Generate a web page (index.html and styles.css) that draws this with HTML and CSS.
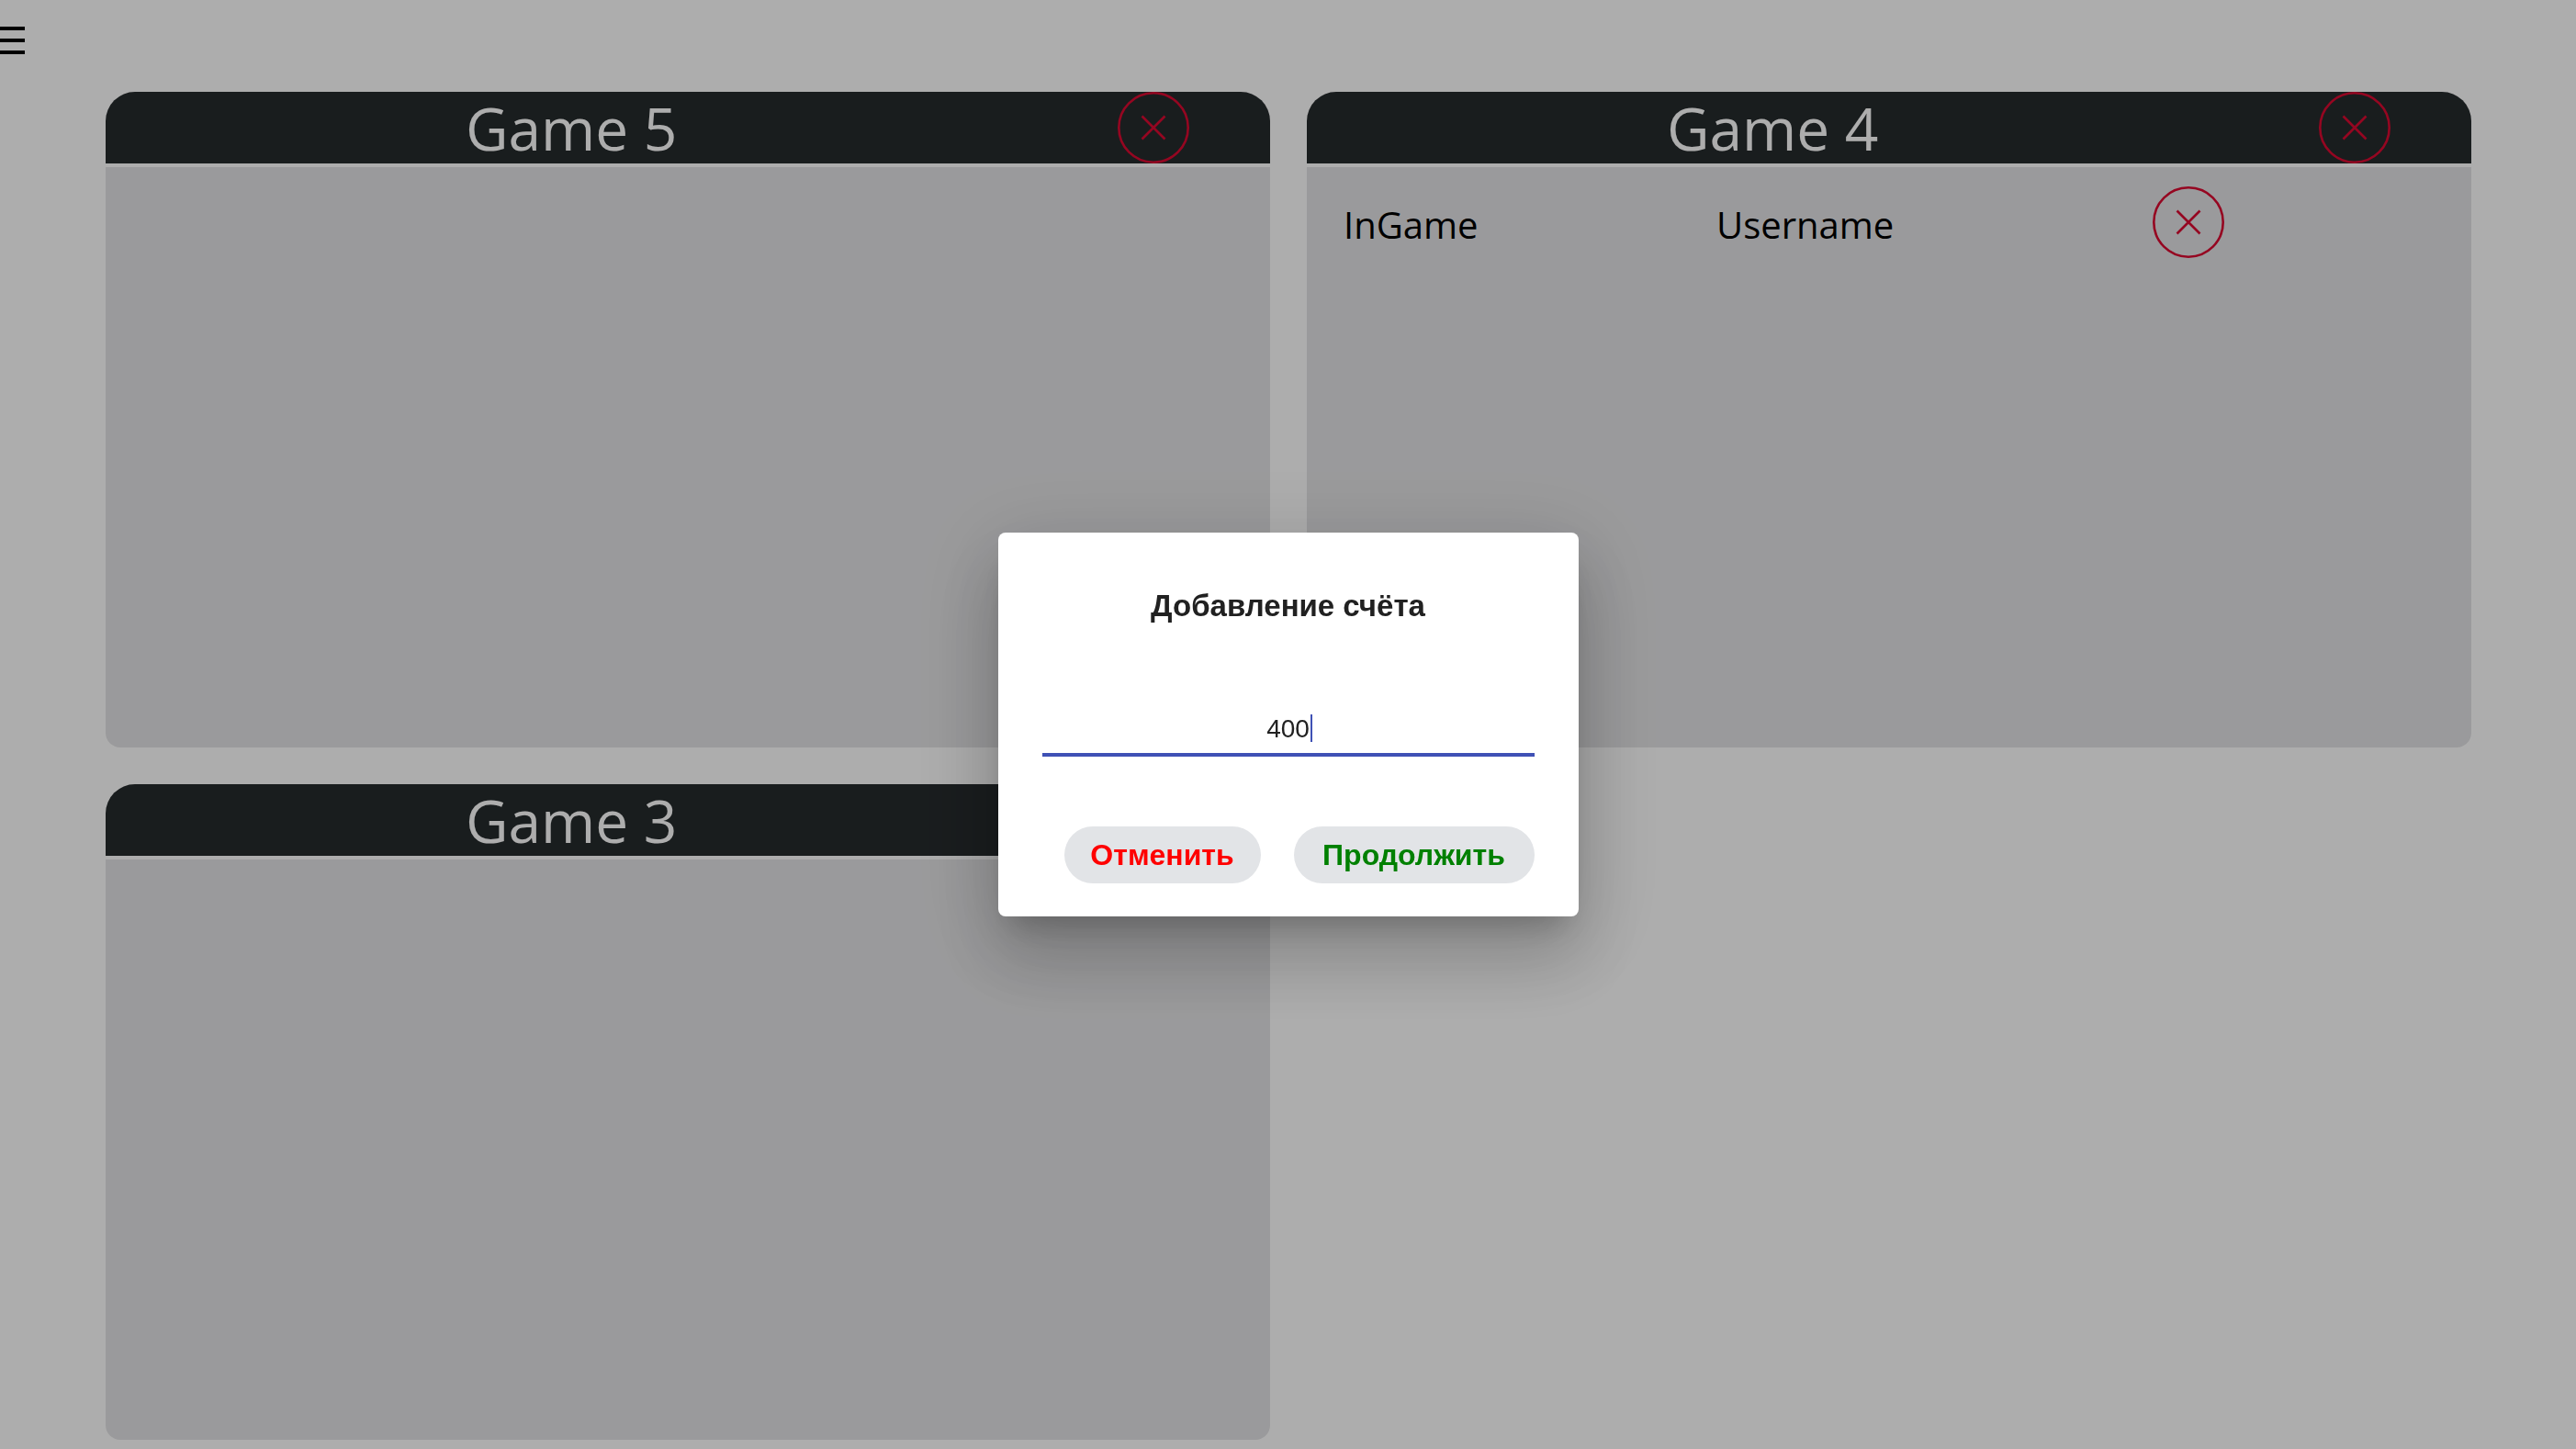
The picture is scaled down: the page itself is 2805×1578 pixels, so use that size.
FILE: index.html
```html
<!DOCTYPE html>
<html lang="ru">
<head>
<meta charset="utf-8">
<meta name="viewport" content="width=device-width, initial-scale=1">
<title>Games</title>
<link rel="stylesheet" href="styles.css">
</head>
<body>
<svg class="sprite" aria-hidden="true">
  <symbol id="close" viewBox="0 0 78 78">
    <circle cx="39" cy="39" r="37.7"/>
    <path d="M26.5 26.5 51.5 51.5M51.5 26.5 26.5 51.5"/>
  </symbol>
</svg>
<header class="topbar">
  <button class="menu" type="button" aria-label="Меню"><span class="bar"></span><span class="bar"></span><span class="bar"></span></button>
</header>
<main class="games">
  <section class="card">
    <div class="card-head">
      <h2 class="card-title">Game 5</h2>
      <button class="close" type="button" aria-label="Удалить Game 5"><svg class="icon"><use href="#close"/></svg></button>
    </div>
    <div class="card-body"></div>
  </section>
  <section class="card">
    <div class="card-head">
      <h2 class="card-title">Game 4</h2>
      <button class="close" type="button" aria-label="Удалить Game 4"><svg class="icon"><use href="#close"/></svg></button>
    </div>
    <div class="card-body">
      <div class="player">
        <span class="player-text">InGame</span>
        <span class="player-text">Username</span>
        <button class="close" type="button" aria-label="Удалить игрока"><svg class="icon"><use href="#close"/></svg></button>
      </div>
    </div>
  </section>
  <section class="card">
    <div class="card-head">
      <h2 class="card-title">Game 3</h2>
      <button class="close" type="button" aria-label="Удалить Game 3"><svg class="icon"><use href="#close"/></svg></button>
    </div>
    <div class="card-body"></div>
  </section>
</main>
<div class="backdrop">
  <form class="dialog" role="dialog" aria-labelledby="dialog-title">
    <h1 class="dialog-title" id="dialog-title"><label for="score">Добавление счёта</label></h1>
    <div class="field">
      <input class="input" id="score" type="text" inputmode="numeric" value="400">
      <span class="caret"></span>
    </div>
    <div class="actions">
      <button class="action cancel" type="button">Отменить</button>
      <button class="action submit" type="submit">Продолжить</button>
    </div>
  </form>
</div>
</body>
</html>
```

FILE: styles.css
```css
* {
  box-sizing: border-box;
}

body {
  margin: 0;
  background: #fff;
  color: #000;
  font-family: "Open Sans", sans-serif;
  font-weight: 500;
}

button {
  margin: 0;
  padding: 0;
  border: 0;
  background: none;
  cursor: pointer;
}

.sprite {
  display: none;
}

.topbar {
  display: flex;
  height: 100px;
  padding-top: 29px;
}

.menu {
  display: flex;
  flex-direction: column;
  gap: 9px;
  width: 27px;
  height: 30px;
}

.bar {
  height: 4px;
  background: #000;
}

.games {
  display: grid;
  grid-template-columns: 1fr 1fr;
  gap: 40px;
  padding: 0 114px 10px 115px;
}

.card {
  display: flex;
  flex-direction: column;
  gap: 4px;
  min-height: 714px;
}

.card-head {
  display: grid;
  grid-template-columns: 4fr 1fr;
  align-items: center;
  justify-items: center;
  border-radius: 32px 32px 0 0;
  background: #262b2d;
}

.card-title {
  margin: 0;
  padding-top: 2px;
  color: #fff;
  font-size: 64px;
  font-weight: 500;
  line-height: 76px;
}

.card-body {
  flex: 1;
  padding: 21px 40px;
  border-radius: 0 0 16px 16px;
  background: #e4e4e6;
}

.close {
  width: 78px;
  height: 78px;
  border-radius: 50%;
}

.icon {
  display: block;
  width: 78px;
  height: 78px;
  fill: none;
  stroke: #dc0a32;
  stroke-width: 2.6;
}

.player {
  display: grid;
  grid-template-columns: 406fr 475fr 307fr;
  align-items: center;
}

.player-text {
  padding-top: 6px;
  font-size: 40px;
  line-height: 54px;
}

.backdrop {
  position: fixed;
  inset: 0;
  display: flex;
  align-items: center;
  justify-content: center;
  background: rgba(0, 0, 0, 0.32);
}

.dialog {
  width: 632px;
  padding: 60px 48px 36px;
  border-radius: 8px;
  background: #fff;
  box-shadow: 0 22px 30px -14px rgba(0, 0, 0, 0.2), 0 48px 76px 6px rgba(0, 0, 0, 0.14), 0 18px 92px 16px rgba(0, 0, 0, 0.12);
  color: #212121;
  font-family: "Liberation Sans", Arial, sans-serif;
}

.dialog-title {
  margin: 0 0 92px;
  font-size: 33px;
  font-weight: 700;
  line-height: 40px;
  text-align: center;
}

.field {
  position: relative;
  margin-bottom: 76px;
}

.input {
  display: block;
  width: 100%;
  height: 52px;
  padding: 0 0 4px;
  border: 0;
  border-bottom: 4px solid #3f51b5;
  border-radius: 0;
  outline: 0;
  background: none;
  color: #212121;
  caret-color: transparent;
  font: 28px/40px "Liberation Sans", Arial, sans-serif;
  text-align: center;
}

.caret {
  position: absolute;
  top: 6px;
  left: calc(50% + 24px);
  width: 2px;
  height: 30px;
  background: #3f51b5;
}

.actions {
  display: grid;
  grid-template-columns: 214px 262px;
  justify-content: end;
  gap: 36px;
}

.action {
  height: 62px;
  border-radius: 31px;
  background: #e2e4e7;
  font: 700 32px/40px "Liberation Sans", Arial, sans-serif;
}

.cancel {
  color: #f00;
}

.submit {
  color: #008000;
}
```
